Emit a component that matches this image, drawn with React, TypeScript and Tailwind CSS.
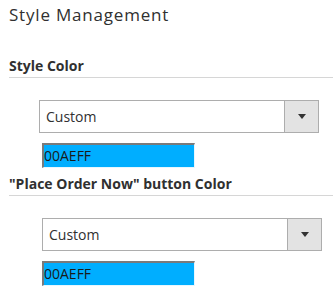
import React from 'react';

const font = { fontFamily: '"Open Sans", "Liberation Sans", sans-serif' };

const ColorSelect: React.FC<{ shift?: boolean }> = ({ shift }) => (
  <div className={shift ? 'pl-[42px]' : 'pl-[39px]'}>
    <div className="flex w-[280px] h-[33px] border border-[#adadad] bg-white">
      <div className="flex-1 flex items-center pl-[6px] text-[14px] text-[#303030]">Custom</div>
      <div className="w-[34px] border-l border-[#adadad] bg-[#e3e3e3] flex items-center justify-center">
        <svg width="8" height="5" viewBox="0 0 8 5">
          <path d="M0 0 H8 L4 5 Z" fill="#333" />
        </svg>
      </div>
    </div>
    <div className={shift ? 'mt-[10px] ml-0' : 'mt-[10px] ml-[3px]'}>
      <div className="w-[153px] h-[25px] bg-[#00aeff] border-t-2 border-l-2 border-t-[#7a7a7a] border-l-[#7a7a7a] border-r border-b border-r-[#e6f7ff] border-b-[#e6f7ff] flex items-center text-[14px] text-[#1a1a1a] leading-none">
        00AEFF
      </div>
    </div>
  </div>
);

export default function App() {
  return (
    <div className="w-[333px] h-[305px] bg-white overflow-hidden" style={font}>
      <h1 className="pl-[9px] pt-[4px] text-[17px] text-[#303030] tracking-[0.8px] leading-[22px]">Style Management</h1>
      <div className="mt-[31px] ml-[9px] border-b border-[#d6d6d6] pb-[2px]">
        <h2 className="text-[14px] font-bold text-[#303030] leading-[18px]">Style Color</h2>
      </div>
      <div className="mt-[22px]">
        <ColorSelect />
      </div>
      <div className="mt-[7px] ml-[9px] border-b border-[#d6d6d6] pb-[2px]">
        <h2 className="text-[14px] font-bold text-[#303030] leading-[18px]">"Place Order Now" button Color</h2>
      </div>
      <div className="mt-[22px]">
        <ColorSelect shift />
      </div>
    </div>
  );
}
